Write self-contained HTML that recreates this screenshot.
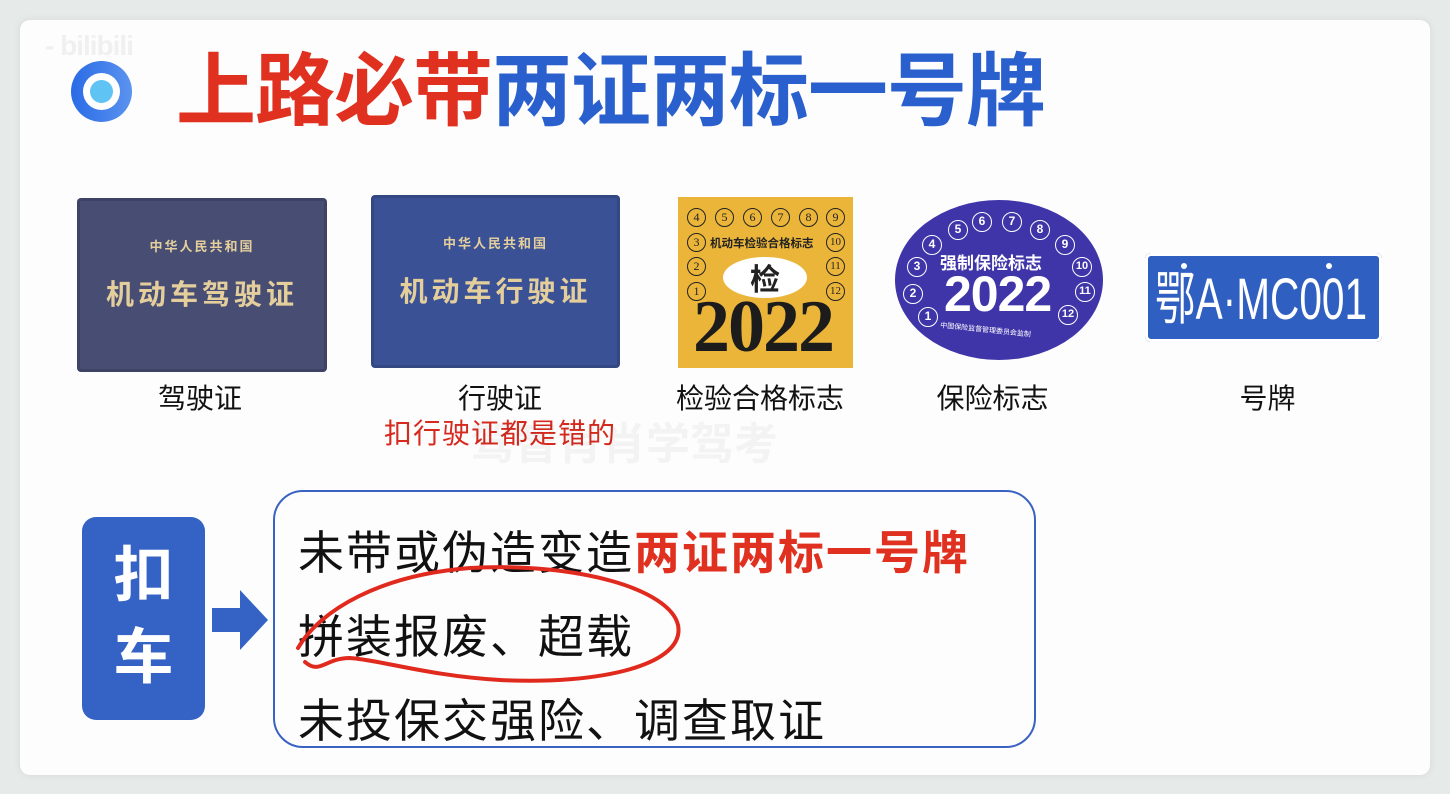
<!DOCTYPE html>
<html><head><meta charset="utf-8"><style>
*{margin:0;padding:0;box-sizing:border-box}
body{width:1450px;height:794px;background:#e6eae8;position:relative;overflow:hidden;font-family:"Liberation Sans","Noto Sans CJK SC",sans-serif}
.card{position:absolute;left:20px;top:20px;width:1410px;height:755px;background:#fdfdfd;border-radius:10px;box-shadow:0 0 8px rgba(0,0,0,.08)}
.a{position:absolute;white-space:nowrap}
.lic{position:absolute;border-radius:4px;box-shadow:inset 0 0 0 3px rgba(0,0,0,.12);color:#e4cf9c;font-weight:bold;text-align:center}
.c{position:absolute;width:19px;height:19px;border:1.5px solid #222;border-radius:50%;font:12px "Liberation Serif",serif;line-height:16px;text-align:center;color:#222}
.w{position:absolute;width:20px;height:20px;border:1.5px solid #fff;border-radius:50%;font:bold 12px "Liberation Sans",sans-serif;line-height:17px;text-align:center;color:#fff}
.lab{position:absolute;top:377px;font-size:28px;color:#111;text-align:center}
.ln{position:absolute;left:298px;font-size:46px;letter-spacing:2px;color:#111}
</style></head><body>
<div class="card"></div>
<div class="a" style="left:45px;top:30px;font:bold 28px 'Liberation Sans',sans-serif;color:#f0f0f0;letter-spacing:-1px">- bilibili</div>
<div class="a" style="left:71px;top:61px;width:61px;height:61px;border-radius:50%;background:linear-gradient(90deg,#2a6be6,#5b93ef)"></div>
<div class="a" style="left:83px;top:73px;width:37px;height:37px;border-radius:50%;background:#fff"></div>
<div class="a" style="left:90px;top:80px;width:23px;height:23px;border-radius:50%;background:#5fc3f3"></div>
<div class="a" style="left:176px;top:42px;font-size:80px;font-weight:bold;line-height:100px;letter-spacing:-1px"><span style="color:#e0301f">上路必带</span><span style="color:#2a5fce">两证两标一号牌</span></div>

<div class="lic" style="left:77px;top:198px;width:250px;height:174px;background:#474d73">
<div style="margin-top:38px;font-size:13px;letter-spacing:2px">中华人民共和国</div>
<div style="margin-top:18px;font-size:28px;letter-spacing:4px">机动车驾驶证</div></div>
<div class="lic" style="left:371px;top:195px;width:249px;height:173px;background:#3b5196">
<div style="margin-top:38px;font-size:13px;letter-spacing:2px">中华人民共和国</div>
<div style="margin-top:18px;font-size:28px;letter-spacing:4px">机动车行驶证</div></div>

<div class="a" style="left:678px;top:197px;width:175px;height:171px;background:#ebb53a"></div>
<div class="c" style="left:687px;top:208px">4</div><div class="c" style="left:715px;top:208px">5</div><div class="c" style="left:743px;top:208px">6</div><div class="c" style="left:771px;top:208px">7</div><div class="c" style="left:799px;top:208px">8</div><div class="c" style="left:826px;top:208px">9</div>
<div class="c" style="left:687px;top:233px">3</div><div class="c" style="left:687px;top:257px">2</div><div class="c" style="left:687px;top:282px">1</div>
<div class="c" style="left:826px;top:233px;font-size:11px">10</div><div class="c" style="left:826px;top:257px;font-size:11px">11</div><div class="c" style="left:826px;top:282px;font-size:11px">12</div>
<div class="a" style="left:710px;top:235px;font-size:11.5px;font-weight:bold;color:#222">机动车检验合格标志</div>
<div class="a" style="left:723px;top:257px;width:84px;height:41px;border-radius:50%;background:#fff;text-align:center;font:bold 30px 'Noto Sans CJK SC',sans-serif;line-height:40px;color:#222">检</div>
<div class="a" style="left:693px;top:294px;font:bold 74px 'Liberation Serif',serif;color:#1c1c1c;line-height:66px;letter-spacing:-2px">2022</div>

<div class="a" style="left:895px;top:200px;width:208px;height:160px;border-radius:50%;background:#3f35a9"></div>
<div class="w" style="left:918px;top:307px">1</div><div class="w" style="left:903px;top:284px">2</div><div class="w" style="left:907px;top:257px">3</div><div class="w" style="left:922px;top:235px">4</div><div class="w" style="left:948px;top:220px">5</div><div class="w" style="left:972px;top:212px">6</div><div class="w" style="left:1002px;top:212px">7</div><div class="w" style="left:1030px;top:220px">8</div><div class="w" style="left:1055px;top:235px">9</div><div class="w" style="left:1072px;top:257px;font-size:11px">10</div><div class="w" style="left:1075px;top:282px;font-size:11px">11</div><div class="w" style="left:1058px;top:305px;font-size:11px">12</div>
<div class="a" style="left:940px;top:249px;font-size:17px;font-weight:bold;color:#fff">强制保险标志</div>
<div class="a" style="left:944px;top:267px;font:bold 50px 'Liberation Sans',sans-serif;color:#fff;line-height:54px;letter-spacing:-1px">2022</div>
<div class="a" style="left:940px;top:325px;font-size:7px;color:#fff;transform:rotate(6deg)">中国保险监督管理委员会监制</div>

<div class="a" style="left:1145px;top:253px;width:237px;height:89px;border-radius:6px;background:#2f5fc0;box-shadow:inset 0 0 0 3px #fff,inset 0 0 0 5px #2f5fc0"></div>
<div class="a" style="left:1181px;top:263px;width:6px;height:6px;border-radius:50%;background:#fff"></div>
<div class="a" style="left:1326px;top:263px;width:6px;height:6px;border-radius:50%;background:#fff"></div>
<div class="a" style="left:1155px;top:268px;font-size:58px;color:#fff;line-height:64px;transform:scaleX(.7);transform-origin:left">鄂A·MC001</div>

<div class="lab" style="left:140px;width:120px">驾驶证</div>
<div class="lab" style="left:440px;width:120px">行驶证</div>
<div class="lab" style="left:660px;width:200px">检验合格标志</div>
<div class="lab" style="left:920px;width:145px">保险标志</div>
<div class="lab" style="left:1220px;width:95px">号牌</div>
<div class="a" style="left:384px;top:412px;font-size:28px;letter-spacing:1px;color:#d62a1e">扣行驶证都是错的</div>
<div class="a" style="left:470px;top:408px;font-size:44px;font-weight:bold;color:rgba(0,0,0,.04)">驾智肖肖学驾考</div>

<div class="a" style="left:82px;top:517px;width:123px;height:203px;border-radius:14px;background:#3563c5;color:#fff;font-size:60px;font-weight:bold;text-align:center;line-height:82px;padding-top:18px">扣<br>车</div>
<svg class="a" style="left:210px;top:588px" width="60" height="64"><polygon points="2,20 30,20 30,2 58,32 30,62 30,44 2,44" fill="#3563c5"/></svg>
<div class="a" style="left:273px;top:490px;width:763px;height:258px;border:2px solid #3a62c2;border-radius:30px"></div>
<div class="ln" style="top:517px">未带或伪造变造<b style="color:#e0301f">两证两标一号牌</b></div>
<div class="ln" style="top:601px">拼装报废、超载</div>
<div class="ln" style="top:685px">未投保交强险、调查取证</div>
<svg class="a" style="left:0;top:0" width="1450" height="794"><path d="M298,648 C320,610 380,575 470,568 C580,562 670,590 678,625 C686,665 600,685 500,680 C430,676 380,660 350,658 C325,658 320,675 305,662" fill="none" stroke="#e12a1e" stroke-width="4" stroke-linecap="round"/></svg>
</body></html>
